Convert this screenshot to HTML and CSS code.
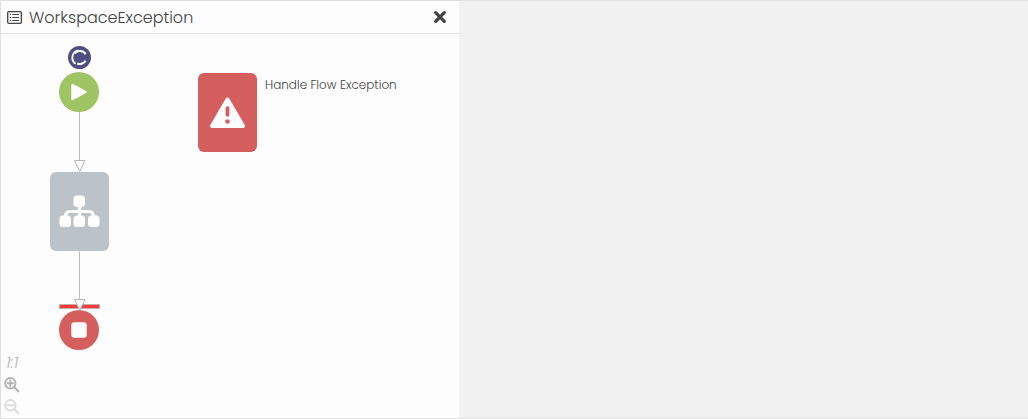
FILE: index.html
```html
<!DOCTYPE html>
<html lang="en">
<head>
<meta charset="utf-8">
<title>WorkspaceException</title>
<link rel="stylesheet" href="styles.css">
</head>
<body>
<main class="workspace">
  <section class="panel">
    <header class="panel-header">
      <svg class="list-icon" viewBox="0 0 15 13" aria-hidden="true">
        <rect x="0.7" y="0.7" width="13.6" height="11.6" rx="1" fill="none" stroke="currentColor" stroke-width="1.3"/>
        <path d="M5.3 3.5H12M5.3 6.5H12M5.3 9.5H12M2.7 3.5H4.1M2.7 6.5H4.1M2.7 9.5H4.1" stroke="currentColor" stroke-width="1.2"/>
      </svg>
      <h1 class="panel-title">WorkspaceException</h1>
      <button class="close" type="button" aria-label="Close">
        <svg viewBox="0 0 14 14"><path d="M2.7 2.7L11.3 11.3M11.3 2.7L2.7 11.3" stroke="currentColor" stroke-width="3.3" stroke-linecap="round"/></svg>
      </button>
    </header>
    <div class="canvas">
      <svg class="edges" aria-hidden="true">
        <path class="edge" d="M78.5 78V126M78.5 217V265"/>
        <path class="arrow" d="M73.5 126.5H84L78.8 137.5Z"/>
      </svg>
      <div class="badge">
        <svg viewBox="0 0 24 24">
          <path d="M11 4.6A7.7 7.7 0 0 0 8 18.6" fill="none" stroke="#fff" stroke-width="1.9"/>
          <path d="M18.4 8.4A7.2 7.2 0 0 0 7 7.6M9.6 18.2A7.2 7.2 0 0 0 18.4 15.4" fill="none" stroke="#fff" stroke-width="2.2"/>
        </svg>
      </div>
      <div class="node round start">
        <svg viewBox="0 0 40 40"><path d="M13.5 13V27L26.5 20Z" fill="#fff" stroke="#fff" stroke-width="2.4" stroke-linejoin="round"/></svg>
      </div>
      <div class="node block group">
        <svg viewBox="0 0 59 79">
          <path d="M29.5 31V50M15.5 50V45Q15.5 39.5 20 39.5H39Q43.5 39.5 43.5 45V50" fill="none" stroke="#fff" stroke-width="3.2"/>
          <g fill="#fff"><rect x="23.5" y="23.5" width="11.5" height="11.5" rx="3.5"/><rect x="9.5" y="43.5" width="11.5" height="11.5" rx="3.5"/><rect x="23.5" y="43.5" width="11.5" height="11.5" rx="3.5"/><rect x="38" y="43.5" width="11.5" height="11.5" rx="3.5"/></g>
        </svg>
      </div>
      <div class="boundary"></div>
      <div class="node round end">
        <svg viewBox="0 0 40 40"><rect x="12.3" y="12.3" width="15.4" height="15.4" rx="3" fill="#fff"/></svg>
      </div>
      <svg class="edges" aria-hidden="true">
        <path class="arrow" d="M73.5 265.5H84L78.8 276.5Z"/>
      </svg>
      <div class="node block exception">
        <svg viewBox="0 0 59 79">
          <path d="M29.5 26.5L45 53H14Z" fill="#fff" stroke="#fff" stroke-width="4" stroke-linejoin="round"/>
          <path d="M29.5 35.2V41.8" stroke="#d55f5f" stroke-width="3.8" stroke-linecap="round"/>
          <circle cx="29.5" cy="48.5" r="2.3" fill="#d55f5f"/>
        </svg>
      </div>
      <span class="node-label">Handle Flow Exception</span>
      <div class="zoom-tools">
        <button class="tool actual" type="button" aria-label="Actual size, 1:1">1:1</button>
        <button class="tool" type="button" aria-label="Zoom in">
          <svg viewBox="0 0 16 16"><circle cx="6.3" cy="6.3" r="5.2"/><path d="M10.2 10.2L14.3 14.3M3.5 6.3H9.1M6.3 3.5V9.1"/></svg>
        </button>
        <button class="tool" type="button" aria-label="Zoom out" disabled>
          <svg viewBox="0 0 16 16"><circle cx="6.3" cy="6.3" r="5.2"/><path d="M10.2 10.2L14.3 14.3M3.5 6.3H9.1"/></svg>
        </button>
      </div>
    </div>
  </section>
</main>
</body>
</html>
```
FILE: styles.css
```css
* { box-sizing: border-box; }

body {
  margin: 0;
  font-family: Poppins, Inter, "Open Sans", sans-serif;
  font-weight: 300;
  color: #444;
}

svg { display: block; }

button {
  border: 0;
  padding: 0;
  background: none;
  color: inherit;
  font: inherit;
}

.workspace {
  display: flex;
  min-height: 100vh;
  background: #f1f1f1;
  border: 1px solid #e0e0e0;
  border-right: 0;
}

.panel {
  display: flex;
  flex-direction: column;
  width: 44.6%;
  background: #fdfdfd;
}

.panel-header {
  display: flex;
  align-items: center;
  gap: 7px;
  height: 33px;
  padding: 0 12px 0 6px;
  border-bottom: 1px solid #e0e0e0;
}

.list-icon {
  width: 15px;
  height: 13px;
}

.panel-title {
  flex: 1;
  margin: 0;
  padding-top: 2px;
  font-size: 16px;
  font-weight: 300;
  line-height: 24px;
}

.close svg {
  width: 14px;
  height: 14px;
}

.canvas {
  position: relative;
  display: flex;
  flex: 1;
  align-items: flex-end;
  min-height: 320px;
}

.edges {
  position: absolute;
  top: 0;
  left: 0;
  width: 100%;
  height: 100%;
  pointer-events: none;
}

.edge {
  fill: none;
  stroke: #bdbdbd;
}

.arrow {
  fill: #fdfdfd;
  stroke: #b3b3b3;
}

.node,
.badge,
.boundary,
.node-label {
  position: absolute;
}

.round {
  left: 58px;
  width: 40px;
  height: 40px;
  border-radius: 50%;
}

.start {
  top: 38px;
  background: #9fc463;
}

.end {
  top: 276px;
  background: #d55f5f;
}

.block {
  width: 59px;
  height: 79px;
  border-radius: 6px;
}

.group {
  top: 138px;
  left: 49px;
  background: #bbc3c9;
}

.exception {
  top: 39px;
  left: 197px;
  background: #d55f5f;
}

.badge {
  top: 12px;
  left: 67px;
  width: 23px;
  height: 23px;
  border-radius: 50%;
  background: #504e82;
}

.boundary {
  top: 270px;
  left: 58px;
  width: 41px;
  height: 5px;
  border: 1px solid #c0b0b0;
  background: #fa3838;
}

.node-label {
  top: 41px;
  left: 264px;
  font-size: 12px;
  line-height: 20px;
  white-space: nowrap;
}

.zoom-tools {
  display: flex;
  flex-direction: column;
  align-items: flex-start;
  gap: 6px;
  padding: 0 0 3px 3px;
  color: #b5b5b5;
}

.tool svg {
  width: 16px;
  height: 16px;
  fill: none;
  stroke: currentColor;
  stroke-width: 2;
  stroke-linecap: round;
}

.tool:disabled { color: #dedede; }

.actual {
  padding-left: 2px;
  font-size: 16px;
  font-style: italic;
  line-height: 16px;
}
```
